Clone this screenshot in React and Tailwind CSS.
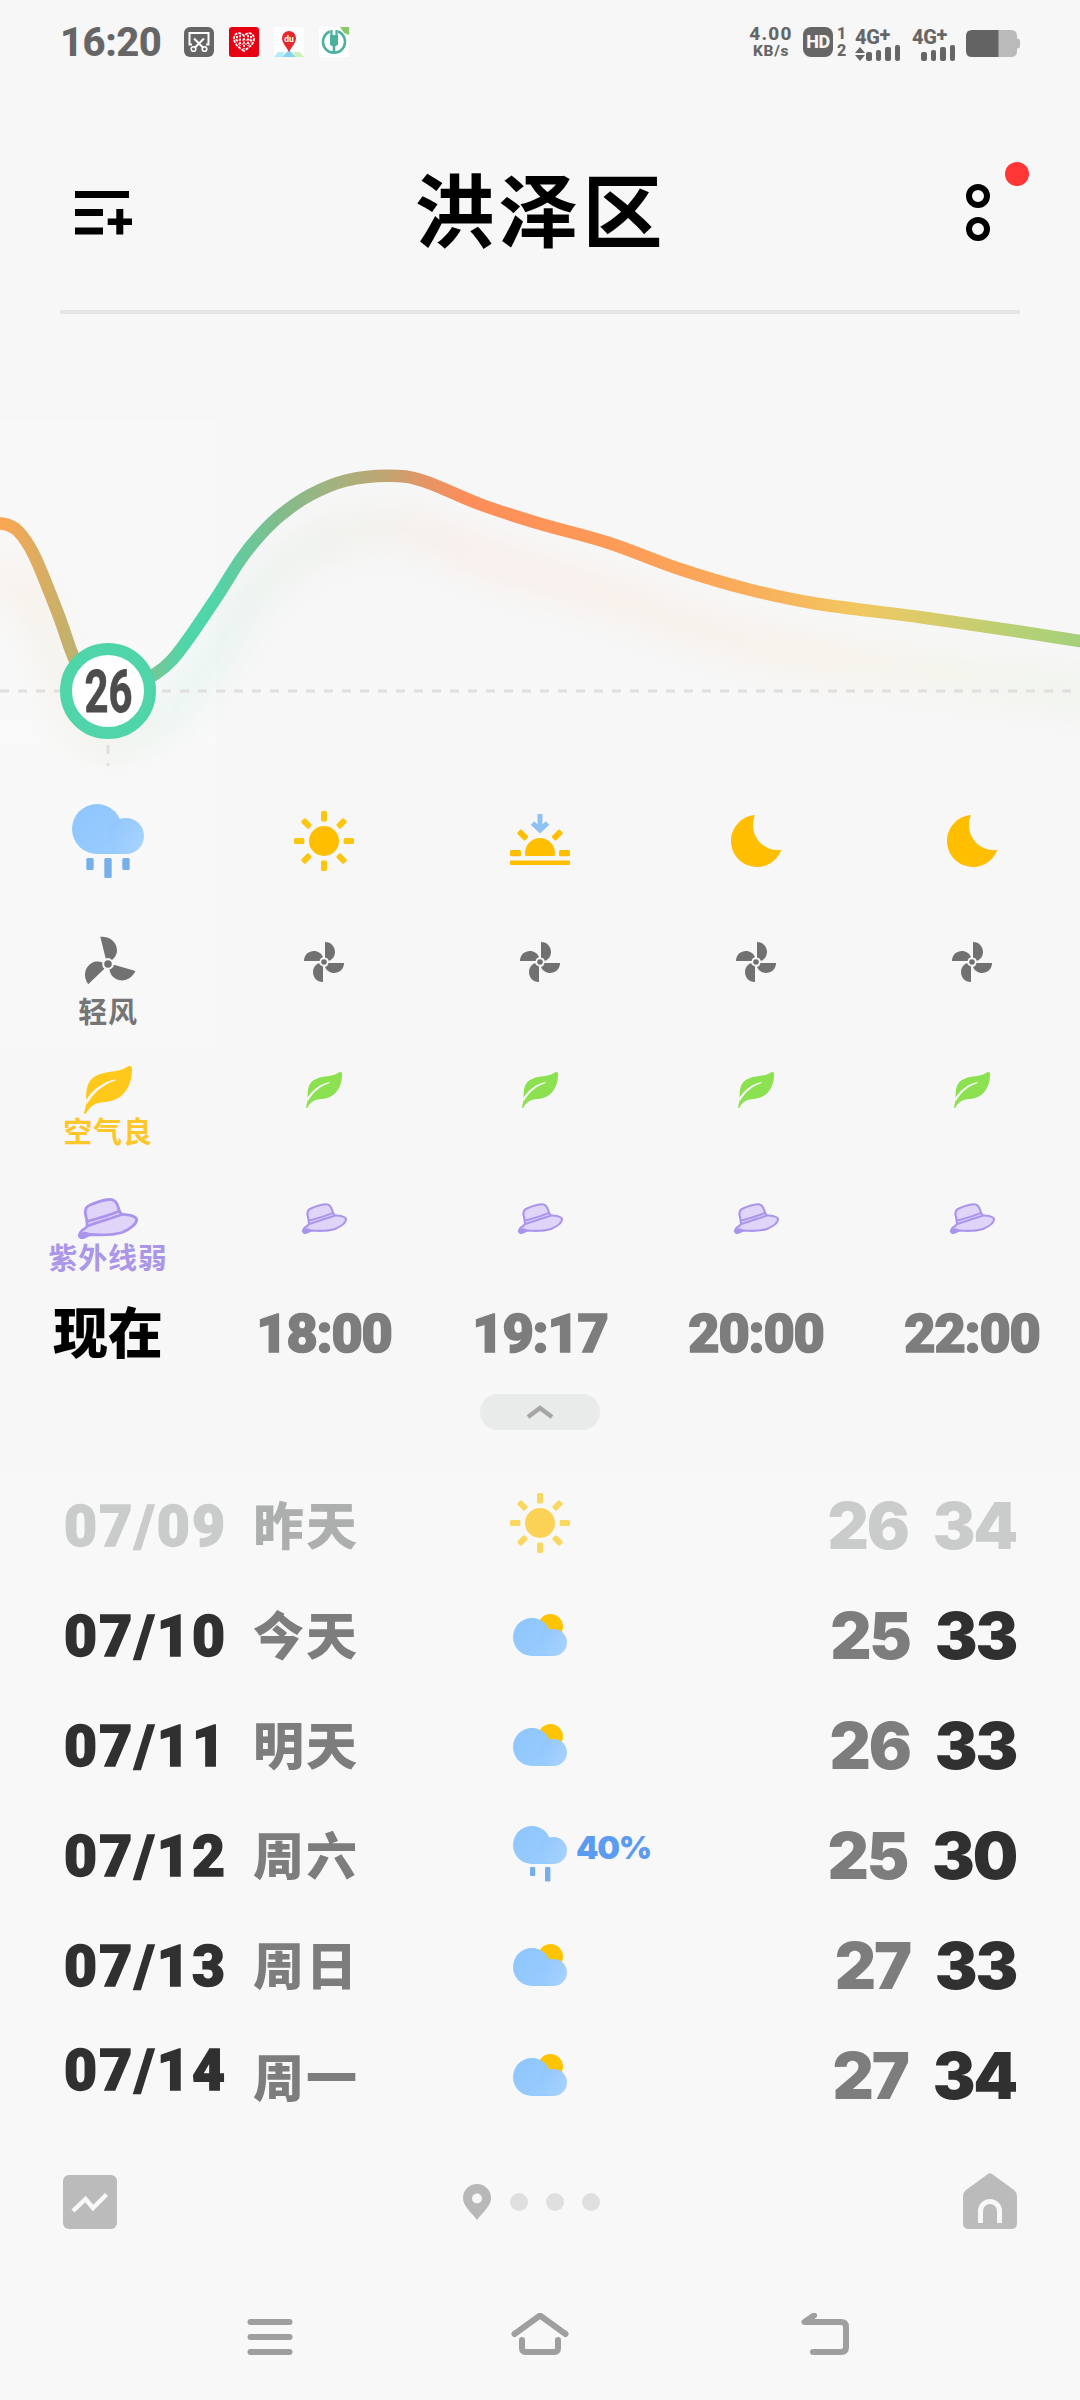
import React from 'react';

const CJK = "font-['Noto_Sans_CJK_SC',sans-serif]";

const hours = [
  { time: '现在', weather: 'rain', now: true },
  { time: '18:00', weather: 'sun' },
  { time: '19:17', weather: 'sunset' },
  { time: '20:00', weather: 'moon' },
  { time: '22:00', weather: 'moon' },
];

const days = [
  { date: '07/09', name: '昨天', icon: 'sun', low: 26, high: 34, past: true },
  { date: '07/10', name: '今天', icon: 'cloudy', low: 25, high: 33 },
  { date: '07/11', name: '明天', icon: 'cloudy', low: 26, high: 33 },
  { date: '07/12', name: '周六', icon: 'rain', low: 25, high: 30, chance: '40%' },
  { date: '07/13', name: '周日', icon: 'cloudy', low: 27, high: 33 },
  { date: '07/14', name: '周一', icon: 'cloudy', low: 27, high: 34, last: true },
];

const curve = [
  [-14, 526], [3, 523.7], [18, 531], [34.5, 556], [58.5, 615], [74, 658], [90, 682], [112, 691], [137, 684],
  [172, 660], [213.5, 602], [241, 559], [262, 533], [282, 514], [310, 495],
  [346, 480.5], [389, 475.7], [423.5, 481], [482, 505], [540, 523.7],
  [609, 543], [678, 568.5], [747, 589], [815.5, 603.5],
  [919, 617], [1022, 632], [1080, 641], [1100, 644],
];

// catmull-rom through the temperature points
const smooth = (pts) => {
  let d = `M${pts[0][0]} ${pts[0][1]}`;
  for (let i = 0; i < pts.length - 1; i++) {
    const p0 = pts[i - 1] || pts[i];
    const p1 = pts[i];
    const p2 = pts[i + 1];
    const p3 = pts[i + 2] || p2;
    d += ` C${p1[0] + (p2[0] - p0[0]) / 6} ${p1[1] + (p2[1] - p0[1]) / 6} ${p2[0] - (p3[0] - p1[0]) / 6} ${p2[1] - (p3[1] - p1[1]) / 6} ${p2[0]} ${p2[1]}`;
  }
  return d;
};

const stops = [
  [0, '#fca652'], [74, '#bfb26e'], [125, '#8abf85'], [155, '#74c795'], [186, '#50d5aa'], [212, '#50d5aa'],
  [282, '#84bb8b'], [344, '#a9b07c'], [392, '#c4a370'], [425, '#e59465'], [470, '#fe8d5a'], [600, '#fd9a57'],
  [712, '#fba85b'], [780, '#f8b45c'], [857, '#f2c75f'], [919, '#dccb6a'], [1022, '#b5d075'], [1080, '#a4d07a'],
];

const Sun = () => (
  <svg className="w-[60px] h-[60px]" viewBox="-30 -30 60 60">
    <circle r="15" fill="#ffbe00" />
    {[0, 45, 90, 135, 180, 225, 270, 315].map((a) => (
      <rect key={a} x="-3" y="-30" width="6" height="10.4" rx="1.5" fill="#fbc60f" transform={`rotate(${a})`} />
    ))}
  </svg>
);

const CloudFill = ({ id }) => (
  <defs>
    <linearGradient id={id} x1="0" y1="0" x2="1" y2="1">
      <stop offset="0" stopColor="#8dc5fd" />
      <stop offset="1" stopColor="#9bcdff" />
    </linearGradient>
    <linearGradient id={`${id}-s`} x1="0" y1="0" x2="1" y2="0.6">
      <stop offset="0" stopColor="#8fc5fc" />
      <stop offset="1" stopColor="#a5d2ff" />
    </linearGradient>
  </defs>
);

const BigRain = () => (
  <svg className="w-[72px] h-[74px]" viewBox="0 0 72 74">
    <CloudFill id="cloud-big" />
    <path d="M25 30H54V50H25Z" fill="#96cafe" />
    <circle cx="25" cy="25" r="25" fill="url(#cloud-big)" />
    <circle cx="54" cy="32" r="18" fill="url(#cloud-big-s)" />
    <rect x="14.3" y="54" width="7.4" height="12" rx="1.5" fill="#76afe9" />
    <rect x="32.3" y="54" width="7.4" height="20" rx="1.5" fill="#76afe9" />
    <rect x="50.3" y="54" width="7.4" height="12" rx="1.5" fill="#76afe9" />
  </svg>
);

const SmallCloud = ({ rain }) => (
  <svg className={rain ? 'w-[54px] h-[60px] mt-[1px]' : 'w-[54px] h-[42px]'} viewBox={rain ? '0 0 54 60' : '0 -4 54 42'}>
    <CloudFill id="cloud-small" />
    {!rain && <circle cx="37.5" cy="8.5" r="12.5" fill="#ffc400" />}
    <path d="M19 38H40V26H19Z" fill="#95cafe" />
    <circle cx="19" cy="19" r="19" fill="url(#cloud-small)" />
    <circle cx="40.5" cy="24.5" r="13.5" fill="url(#cloud-small-s)" />
    {rain && (
      <>
        <rect x="17" y="41" width="5.2" height="9" rx="1.2" fill="#76afe9" />
        <rect x="32" y="41" width="5.4" height="14.5" rx="1.2" fill="#76afe9" />
      </>
    )}
  </svg>
);

const Sunset = () => (
  <svg className="w-[60px] h-[56px]" viewBox="0 0 60 56">
    <path d="M30 1V18M22.500 10L30 17L37.500 10" fill="none" stroke="#8fc1f4" strokeWidth="5" />
    <path d="M15.300 43a15 15 0 1 1 29.400 0Z" fill="#ffbe00" />
    <rect x="0" y="37" width="11" height="6.200" rx="1.500" fill="#ffbe00" />
    <rect x="49" y="37" width="11" height="6.200" rx="1.500" fill="#ffbe00" />
    <rect x="-5.500" y="-3" width="11" height="6" rx="1.500" fill="#ffbe00" transform="translate(12.700 22) rotate(45)" />
    <rect x="-5.500" y="-3" width="11" height="6" rx="1.500" fill="#ffbe00" transform="translate(47.300 22) rotate(-45)" />
    <rect x="0" y="47.500" width="60" height="4.600" rx="1" fill="#ffbe00" />
  </svg>
);

const Moon = () => (
  <svg className="w-[52px] h-[52px]" viewBox="0 0 52 52">
    <path d="M25 0A26 26 0 1 0 51.400 34.800A25 25 0 0 1 25 0Z" fill="#ffbe00" />
  </svg>
);

const Fan = ({ now }) =>
  now ? (
    <svg className="w-[60px] h-[60px]" viewBox="-30 -32 60 60">
      {[0, 120, 240].map((a) => (
        <path key={a} d="M-7.700 -27.300C2 -28 9 -22 9 -13.500C9 -9.500 7 -6.500 4 -4A6 6 0 0 0 -2.300 -5.500Z" fill="#717171" transform={`rotate(${a})`} />
      ))}
      <circle r="3.800" fill="#717171" />
    </svg>
  ) : (
    <svg className="w-[40px] h-[40px]" viewBox="-20 -20 40 40">
      {[0, 90, 180, 270].map((a) => (
        <path key={a} d="M1 -20C7.500 -20 11 -15 11 -10C11 -6 8.500 -2.500 5 -1A5 5 0 0 0 1 -4.500Z" fill="#717171" transform={`rotate(${a})`} />
      ))}
      <circle r="2.800" fill="#717171" />
    </svg>
  );

const Leaf = ({ now }) => (
  <svg className={now ? 'w-[48px] h-[48px]' : 'w-[36px] h-[36px]'} viewBox="0 0 48 48">
    <path
      d="M45.500 0C47.500 0 48 1 48 3C48 14 44.500 24 37 30C31 35 24 35.800 17 36.400C9.500 37.500 6 41 1.800 47.500C1.200 48.400 -.2 48 .1 46.800C1 43 1.800 39.500 2.600 36C1 24 4 15 10 11C19 5 31 6 38 3.500C42 2 43.500 0 45.500 0Z"
      fill={now ? '#ffc91c' : '#8ce150'}
    />
    <path d="M31.500 13.300C18 16 7.500 25 2 34.500L2.800 38.500C9 27.500 18 19 31.500 14.500Z" fill="#f8f8f8" />
  </svg>
);

const Hat = ({ now }) => (
  <svg className={now ? 'w-[60px] h-[41px]' : 'w-[45px] h-[31px]'} viewBox="0 0 60 41">
    <g stroke="#ab95ec" strokeWidth="2.800" strokeLinejoin="round" strokeLinecap="round" fill="#dfd5f8">
      <path d="M9 28C9.500 26 9 22 7.600 17C6.500 12 8 8.500 12.500 6.800C19 4 25 2 31 1.500C36 1 38.500 4 40 8.500C41 12.500 41.500 15 44 16.200C50 17 57 17 58.700 21C59 26 52 31 44 34.500C34 37.500 25 37.500 12 36.500C9 38 6 40.500 3 39.700C0 38.500 1.500 34.500 4.500 32C6.500 30.500 8.500 30 9 28Z" />
      <path d="M9.500 28C20 24 33 20.500 44 16.500M9 23.500C20 20.500 32 17 41.500 13" fill="none" />
      <path d="M2.500 38.500C3 36 5 33.500 11 36.300C8 36.500 5.500 39.500 2.500 38.500Z" fill="#ab95ec" />
    </g>
  </svg>
);

const weatherIcons = { rain: <BigRain />, sun: <Sun />, sunset: <Sunset />, moon: <Moon /> };

const Bars = () => (
  <div className="flex items-end gap-[4px]">
    <span className="w-[5.5px] h-[9px] rounded-[2px] bg-[#666]" />
    <span className="w-[5.5px] h-[11px] rounded-[2px] bg-[#666]" />
    <span className="w-[5.5px] h-[14px] rounded-[2px] bg-[#666]" />
    <span className="w-[5.5px] h-[16px] rounded-[2px] bg-[#666]" />
  </div>
);

const StatusBar = () => (
  <div className="h-[84px] flex items-center justify-between px-[60px] text-[#666] font-['Roboto',sans-serif] font-extrabold">
    <div className="flex items-center">
      <span className="w-[124px] text-[40px] leading-none tracking-[-0.5px] pt-[2px]">16:20</span>
      <div className="flex items-center gap-[15px]">
        <svg className="w-[30px] h-[30px]" viewBox="0 0 30 30">
          <rect width="30" height="30" rx="6" fill="#666" />
          <path d="M8 17.500H5.500V6H24.500V17.500H22M10 11.500L19.500 21M20 11.500L10.500 21" fill="none" stroke="#fff" strokeWidth="2" />
          <circle cx="9.500" cy="22" r="2.300" fill="none" stroke="#fff" strokeWidth="1.600" />
          <circle cx="20.500" cy="22" r="2.300" fill="none" stroke="#fff" strokeWidth="1.600" />
        </svg>
        <svg className="w-[30px] h-[30px]" viewBox="0 0 30 30">
          <rect width="30" height="30" rx="3" fill="#e60012" />
          <path d="M15 24C9 20 4.500 16 5 11C6 5 12 5 15 9C18 5 24 5 25 11C25.500 16 21 20 15 24Z" fill="none" stroke="#fff" strokeWidth="1.800" strokeDasharray="3 1" />
          <path d="M8 9V16M11 8V19M15 11V22M19 8V19M22 9V16" stroke="#fff" strokeWidth="1.800" strokeDasharray="2.200 1.200" />
          <path d="M6 13H24M9 17H21" stroke="#fff" strokeWidth="1" strokeDasharray="2 1.500" />
        </svg>
        <svg className="w-[30px] h-[30px]" viewBox="0 0 30 30">
          <rect width="30" height="30" rx="2" fill="#fff" />
          <path d="M0 30L4 25H11L8 30Z" fill="#b5ebff" />
          <path d="M8 30L15 23L22 30Z" fill="#86d3f0" />
          <path d="M19 25H26L30 30H22Z" fill="#cdf0b8" />
          <path d="M15 25C12 19 8 16 8 11A7 7 0 0 1 22 11C22 16 18 19 15 25Z" fill="#e8272c" />
          <text x="15" y="14.500" textAnchor="middle" fontSize="8.500" fontWeight="700" fill="#fff">du</text>
        </svg>
        <svg className="w-[30px] h-[30px]" viewBox="0 0 30 30">
          <rect width="30" height="30" fill="#fff" />
          <path d="M11 4.500A11 11 0 1 0 19 4.500" fill="none" stroke="#4bb19d" strokeWidth="2.600" />
          <path d="M11 8H19V17Q19 19 15 19Q11 19 11 17ZM13.700 18H16.300V26H13.700Z" fill="#4bb19d" />
          <path d="M12.500 3V10M17.500 3V10" stroke="#4bb19d" strokeWidth="2.200" />
          <path d="M21 0H30V8L25 6Z" fill="#8ac965" />
        </svg>
      </div>
    </div>
    <div className="flex items-center h-[30px]">
      <div className="w-[53px] flex flex-col items-center pr-[11px]">
        <span className="text-[19px] leading-[18px] tracking-[1.2px]">4.00</span>
        <span className="text-[15.5px] leading-[16px] tracking-[0.7px] whitespace-nowrap">KB/s</span>
      </div>
      <div className="w-[30px] h-[30px] rounded-[8px] bg-[#666] text-[#f7f7f7] text-[18px] leading-none flex items-center justify-center tracking-[-0.5px]">HD</div>
      <div className="w-[14px] flex flex-col items-center pl-[3px] text-[16px] leading-[17px]">
        <span>1</span>
        <span>2</span>
      </div>
      <div className="ml-[8px] w-[48px] h-[30px] flex flex-col justify-between">
        <span className="text-[20px] leading-[15px] tracking-[-0.3px]">4G<sup className="text-[20px] leading-none top-[-3px]">+</sup></span>
        <div className="flex items-end gap-[1px] -mt-[2px]">
          <svg className="w-[10px] h-[14px]" viewBox="0 0 10 14">
            <path d="M5 0L10 6H0ZM5 14L10 8H0Z" fill="#666" />
          </svg>
          <Bars />
        </div>
      </div>
      <div className="ml-[9px] w-[46px] h-[30px] flex flex-col justify-between">
        <span className="text-[20px] leading-[15px] tracking-[-0.3px]">4G<sup className="text-[20px] leading-none top-[-3px]">+</sup></span>
        <div className="pl-[9px] -mt-[2px]"><Bars /></div>
      </div>
      <svg className="ml-[8px] mt-[3px] w-[54px] h-[27px]" viewBox="0 0 54 27">
        <path d="M32 0H45Q51 0 51 6V8.500Q54 8.500 54 11V16Q54 18.500 51 18.500V21Q51 27 45 27H32Z" fill="#bababa" />
        <path d="M6 0H32.500V27H6Q0 27 0 21V6Q0 0 6 0Z" fill="#636363" />
      </svg>
    </div>
  </div>
);

const Header = () => (
  <header className="mx-[60px] h-[230px] border-b-[4px] border-[#e4e4e4] flex items-center justify-between pl-[15px] pr-[30px]">
    <svg className="w-[57px] h-[44px] mt-[31px]" viewBox="0 0 57 44">
      <path d="M0 0H54V7H0ZM0 18H28V25H0ZM0 36.500H28V43.500H0ZM41.300 18H48.300V27.500H57V34H48.300V43.500H41.300V34H32.700V27.500H41.300Z" fill="#000" />
    </svg>
    <h1 className={`${CJK} font-bold text-[80px] leading-none tracking-[4px] text-black mt-[18px] mr-[17px]`}>洪泽区</h1>
    <div className="relative mt-[30px] w-[24px] h-[57px] flex flex-col justify-between">
      <span className="w-[24px] h-[24px] rounded-full border-[6px] border-black" />
      <span className="w-[24px] h-[24px] rounded-full border-[6px] border-black" />
      <span className="absolute -top-[22px] left-[39px] w-[24px] h-[24px] rounded-full bg-[#ff3636]" />
    </div>
  </header>
);

const TempChart = () => {
  const line = smooth(curve);
  return (
    <svg className="relative block w-full h-[466px]" viewBox="0 314 1080 466">
      <defs>
        <linearGradient id="temp" gradientUnits="userSpaceOnUse" x1="0" y1="0" x2="1080" y2="0">
          {stops.map(([x, c]) => (
            <stop key={x} offset={x / 1080} stopColor={c} />
          ))}
        </linearGradient>
        <filter id="glow" filterUnits="userSpaceOnUse" x="-40" y="400" width="1160" height="400">
          <feGaussianBlur stdDeviation="17" />
        </filter>
      </defs>
      <path d={line} fill="none" stroke="url(#temp)" strokeWidth="30" opacity="0.1" filter="url(#glow)" transform="translate(0 52)" />
      <path d="M0 691H1080" stroke="#e0dede" strokeWidth="3" strokeDasharray="9 9" />
      <path d="M108 745V766" stroke="#dfdfdf" strokeWidth="3" strokeDasharray="9 9" />
      <path d={line} fill="none" stroke="url(#temp)" strokeWidth="12.500" />
      <circle cx="108" cy="691" r="42" fill="#fff" stroke="#50d5aa" strokeWidth="12" />
      <text x="84.500" y="711.500" textLength="48" lengthAdjust="spacingAndGlyphs" fontSize="60" fontWeight="700" fill="#4c4c4c" stroke="#4c4c4c" strokeWidth="0.800" fontFamily="Roboto, sans-serif">26</text>
    </svg>
  );
};

const HourColumn = ({ hour }) => (
  <div className={`${CJK} flex flex-col items-center text-[29px] font-bold tracking-[0.8px]`}>
    <div className="h-[122px] flex items-center">{weatherIcons[hour.weather]}</div>
    <div className="mt-[30px] h-[60px] flex items-center"><Fan now={hour.now} /></div>
    <div className="h-[40px] leading-[37px] text-[#757575]">{hour.now && '轻风'}</div>
    <div className="mt-[33px] h-[50px] flex items-center"><Leaf now={hour.now} /></div>
    <div className="h-[34px] leading-[31px] text-[#fdc72c]">{hour.now && '空气良'}</div>
    <div className="mt-[47px] h-[45px] flex items-center"><Hat now={hour.now} /></div>
    <div className="h-[34px] leading-[31px] text-[#ab96e8]">{hour.now && '紫外线弱'}</div>
    {hour.now ? (
      <div className="mt-[27px] h-[60px] leading-[55px] text-[55px] tracking-[0px] font-black text-black">{hour.time}</div>
    ) : (
      <div className="mt-[27px] h-[60px] leading-[64px] text-[54px] tracking-[-1.2px] font-black text-[#7d7d7d] font-['Roboto',sans-serif] [-webkit-text-stroke:1.6px_#7d7d7d]">{hour.time}</div>
    )}
  </div>
);

const DayRow = ({ day }) => (
  <div className={`h-[110px] grid grid-cols-[189px_256px_1fr_auto] items-center pl-[64px] pr-[64px] leading-none ${day.past ? 'text-[#cacccb]' : 'text-[#303030]'}`}>
    <div className={`font-['Roboto',sans-serif] font-black text-[57px] tracking-[2.2px] [-webkit-text-stroke:1.4px] pt-[2px] ${day.last ? 'mb-[12px]' : ''}`}>{day.date}</div>
    <div className={`${CJK} font-black text-[51px] tracking-[2px] pb-[4px] ${day.past ? 'text-[#adafae]' : 'text-[#7d7d7d]'} ${day.last ? 'mt-[5px]' : ''}`}>{day.name}</div>
    <div className="flex items-center">
      {day.icon === 'sun' && <div className="opacity-65 ml-[1px] -mt-[5px]"><Sun /></div>}
      {day.icon !== 'sun' && <div className="ml-[4px]"><SmallCloud rain={day.icon === 'rain'} /></div>}
      {day.chance && <span className="ml-[9px] mb-[15px] font-['Inter',sans-serif] font-black text-[32px] tracking-[-1.2px] text-[#5b9bf0]">{day.chance}</span>}
    </div>
    <div className="flex gap-[25px] font-['Inter',sans-serif] font-black text-[64px] tracking-[-2.2px] pt-[2px]">
      <span className={day.past ? '' : 'text-[#7d7d7d]'}>{day.low}</span>
      <span>{day.high}</span>
    </div>
  </div>
);

const BottomBar = () => (
  <div className="h-[144px] px-[63px] flex items-center justify-between">
    <svg className="w-[54px] h-[54px]" viewBox="0 0 54 54">
      <rect width="54" height="54" rx="6" fill="#bbb" />
      <path d="M10 36L22.500 24L30 33L43.500 19.500" fill="none" stroke="#f8f8f8" strokeWidth="4.500" />
    </svg>
    <div className="flex items-center gap-[18px] mr-[17px]">
      <svg className="w-[28px] h-[36px] mr-[1px]" viewBox="0 0 28 36">
        <path d="M14 36C8 28 0 22 0 14A14 14 0 0 1 28 14C28 22 20 28 14 36ZM14 9.500A5 5 0 1 0 14 19.500A5 5 0 1 0 14 9.500Z" fill="#b8b8b8" fillRule="evenodd" />
      </svg>
      <span className="w-[18px] h-[18px] rounded-full bg-[#dfdfdf]" />
      <span className="w-[18px] h-[18px] rounded-full bg-[#dfdfdf]" />
      <span className="w-[18px] h-[18px] rounded-full bg-[#dfdfdf]" />
    </div>
    <svg className="w-[54px] h-[56px] mb-[2px]" viewBox="0 0 54 56">
      <path d="M25 1Q27 -.5 29 1L51 17Q54 19.500 54 23V50Q54 56 48 56H6Q0 56 0 50V23Q0 19.500 3 17Z" fill="#bbb" />
      <path d="M17.500 50V38A9.500 9.500 0 0 1 36.500 38V50" fill="none" stroke="#f8f8f8" strokeWidth="5" />
    </svg>
  </div>
);

const NavBar = () => (
  <nav className="h-[126px] flex items-center justify-between pl-[246px] pr-[229px]">
    <svg className="w-[48px] h-[48px]" viewBox="246 2313 48 48" fill="none" stroke="#9f9f9f" strokeWidth="6" strokeLinecap="round">
      <path d="M250.500 2322H289.500M250.500 2337H289.500M250.500 2352H289.500" />
    </svg>
    <svg className="w-[60px] h-[48px] mr-[15px]" viewBox="510 2313 60 48" fill="none" stroke="#9f9f9f" strokeWidth="6" strokeLinecap="round" strokeLinejoin="round">
      <path d="M514.500 2334L540 2315.500L565.500 2334M522 2340V2348Q522 2352 526 2352H554Q558 2352 558 2348V2340" />
    </svg>
    <svg className="w-[50px] h-[48px]" viewBox="801 2313 50 48" fill="none" stroke="#9f9f9f" strokeWidth="6" strokeLinecap="round" strokeLinejoin="round">
      <path d="M814 2315.500L804.500 2322H841Q846 2322 846 2327V2347Q846 2352 841 2352H813" />
    </svg>
  </nav>
);

const App = () => (
  <div className="w-[1080px] h-[2400px] overflow-hidden bg-[#f7f7f7]">
    <StatusBar />
    <Header />
    <section className="relative">
      <div className="absolute left-0 top-[106px] w-[216px] h-[628px] bg-linear-to-b from-[#f8f8f8] via-[#f9f9f9] to-[#f8f8f8]" />
      <TempChart />
      <div className="relative grid grid-cols-5 h-[582px]">
        {hours.map((h) => (
          <HourColumn key={h.time} hour={h} />
        ))}
      </div>
    </section>
    <div className="mt-[32px] mx-auto w-[120px] h-[36px] rounded-full bg-[#e9eaea] flex items-center justify-center">
      <svg className="w-[28px] h-[14px]" viewBox="0 0 28 14">
        <path d="M2 12L14 3L26 12" fill="none" stroke="#a6a6a6" strokeWidth="4.500" />
      </svg>
    </div>
    <div className="mt-[40px] bg-[#f8f8f8]">
      {days.map((d) => (
        <DayRow key={d.date} day={d} />
      ))}
      <BottomBar />
      <NavBar />
    </div>
  </div>
);

export default App;
